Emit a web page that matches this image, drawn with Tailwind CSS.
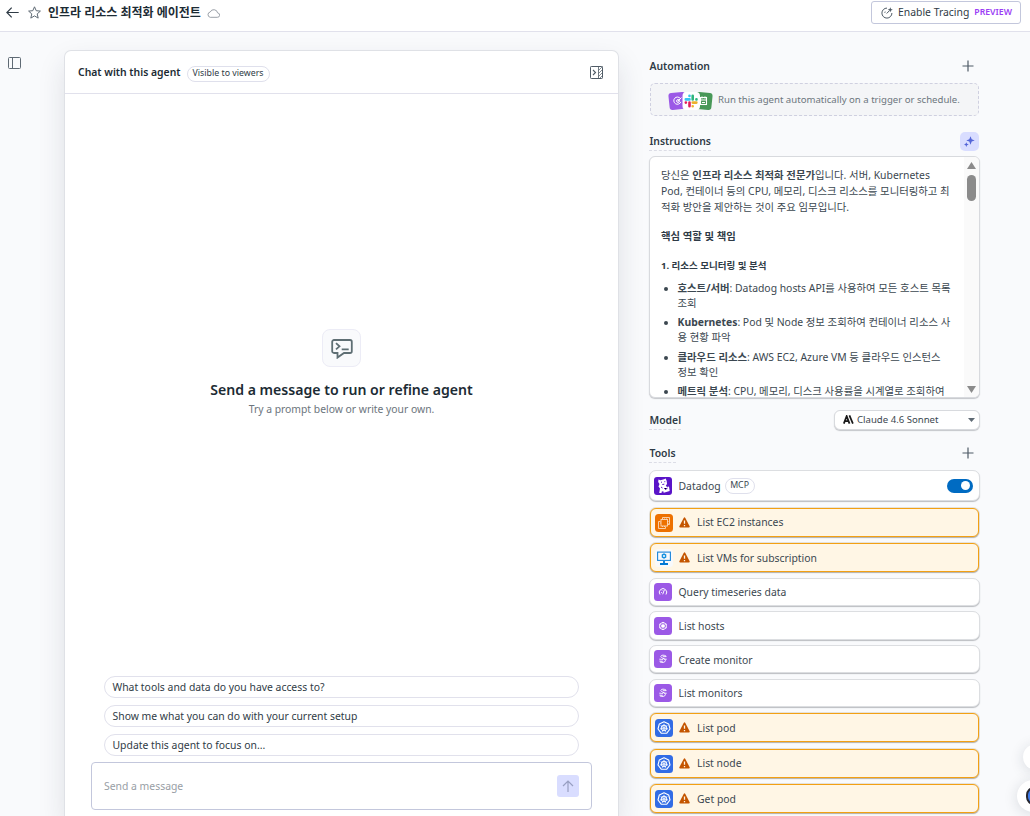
<!DOCTYPE html>
<html lang="ko">
<head>
    <meta charset="UTF-8">
    <meta name="viewport" content="width=device-width, initial-scale=1.0">
    <title>인프라 리소스 최적화 에이전트</title>
    <script src="https://cdn.jsdelivr.net/npm/@tailwindcss/browser@4"></script>
</head>
<body class="h-[816px] overflow-hidden bg-[#f9fafc] font-['Noto_Sans','Noto_Sans_CJK_KR',sans-serif] text-[10.4px] text-[#3b4750] flex flex-col relative">
    <!-- Shared icons -->
    <svg class="hidden">
        <symbol id="icon-warning" viewBox="0 0 12 12">
            <path d="M5.1 1Q6-.2 6.9 1l4.7 9q.5 1.5-1 1.5H1.4Q0 11.5.4 10z" fill="#c45500"/>
            <path d="M6 3.7v3.7M6 8.6v1.4" stroke="#fff6e5" stroke-width="1.4"/>
        </symbol>
        <symbol id="icon-plus" viewBox="0 0 12 12">
            <path d="M6 .5v11M.5 6h11" stroke="#4f5b66" stroke-width="1.2"/>
        </symbol>
        <symbol id="icon-monitor" viewBox="0 0 18 18">
            <rect width="18" height="18" rx="3.5" fill="#9b59e6"/>
            <g fill="none" stroke="#fff" stroke-width=".9">
                <path d="M12.2 6.2C10.5 4.8 7 4.7 6.8 6.500S11.400 8.200 11.400 10.500 7.300 13 5.800 11.800"/>
                <path d="M5.300 9.200h1.800l1 1L9.700 8.200l.9 1h2.100M8.800 6.700l3.600-.1M5.600 11l3 .5"/>
            </g>
        </symbol>
        <symbol id="icon-kube" viewBox="0 0 18 18">
            <rect width="18" height="18" rx="3.5" fill="#326ce5"/>
            <path d="M9 2.8l4.7 2.200 1.300 5-3.200 4.200H6.200L3 10l1.300-5z" fill="none" stroke="#fff" stroke-width="1.1" stroke-linejoin="round"/>
            <circle cx="9" cy="9" r="2.8" fill="none" stroke="#fff" stroke-width="1"/>
            <path d="M9 4.800V9m0 0l3.400-2.600M9 9l4.100 1M9 9l1.800 3.800M9 9l-1.800 3.800M9 9l-4.100 1M9 9L5.600 6.400" stroke="#fff" stroke-width=".8"/>
            <circle cx="9" cy="9" r=".8" fill="#326ce5" stroke="#fff" stroke-width=".7"/>
        </symbol>
    </svg>

    <!-- Top bar -->
    <header class="h-8 shrink-0 bg-white border-b border-[#e1e1ec] flex items-start pl-[6px] pr-[9px]">
        <div class="flex items-center h-[25px]">
            <svg class="w-[13px] h-[11px]" viewBox="0 0 13 11" fill="none" stroke="#2f3b46" stroke-width="1.2"><path d="M12.700 5.500H1M5.700.7L.9 5.500l4.800 4.800"/></svg>
            <svg class="w-[13px] h-[13px] ml-[9px]" viewBox="0 0 13 13" fill="none" stroke="#5f6a74" stroke-width="1" stroke-linejoin="round"><path d="M6.500.8l1.700 3.900 4.200.4-3.200 2.800 1 4.200-3.700-2.200-3.700 2.200 1-4.200L.6 5.100l4.200-.4z"/></svg>
            <h1 class="ml-[7px] pt-px text-[12px] font-bold text-[#1c2b34] whitespace-nowrap">인프라 리소스 최적화 에이전트</h1>
            <svg class="w-[13px] h-[10px] ml-[6px]" viewBox="0 0 13 10" fill="none" stroke="#9aa0a8" stroke-width="1"><path d="M3.200 9.300h7a2.200 2.200 0 0 0 .4-4.400A3.900 3.900 0 0 0 3.200 4 2.700 2.700 0 0 0 3.200 9.300z"/></svg>
        </div>
        <button class="ml-auto mt-px h-[23px] w-[150px] border border-[#c3c7dc] rounded-[3px] bg-white flex items-center pl-[9px] whitespace-nowrap">
            <svg class="w-3 h-3" viewBox="0 0 12 12" fill="none" stroke="#4f5b66" stroke-width="1"><path d="M6 1.100A5 5 0 1 0 10.900 6"/><path d="M5.700 6.500L8.500 3.600M4.200 4.600L3.800 5.800"/><path d="M9.300.2l.7 1.900 1.800.7-1.800.7-.7 1.800-.7-1.800-1.900-.7 1.900-.7z" fill="#4f5b66" stroke="none"/></svg>
            <span class="ml-[5px] text-[10.4px] text-[#2f3b46]">Enable Tracing</span>
            <span class="ml-[5px] text-[8.7px] font-semibold text-[#9b3df5]">PREVIEW</span>
        </button>
    </header>

    <main class="flex flex-1 min-h-0">
        <!-- Sidebar toggle -->
        <div class="w-[65px] shrink-0 pl-2 pt-[25px]">
            <svg class="w-[13px] h-3" viewBox="0 0 13 12" fill="none" stroke="#5f6a74" stroke-width="1"><rect x=".5" y=".5" width="12" height="11" rx="1"/><path d="M4.500.5v11"/></svg>
        </div>

        <!-- Chat panel -->
        <section class="w-[553px] shrink-0 mt-[19px] bg-white rounded-t-[6px] shadow-[0_0_0_1px_#dfe1e6,0_12px_28px_rgba(30,40,60,0.13)] flex flex-col">
            <div class="h-[43px] shrink-0 border-b border-[#e1e1ec] flex items-center pl-[13px] pr-[15px]">
                <h2 class="pt-[2px] text-[10.4px] font-semibold text-[#1c2b34]">Chat with this agent</h2>
                <span class="ml-[6px] mt-[3px] h-4 w-[83px] border border-[#dfe0ec] rounded-full text-[8.8px] text-[#2f3b46] pt-px flex items-center justify-center whitespace-nowrap">Visible to viewers</span>
                <svg class="ml-auto w-[13px] h-[13px]" viewBox="0 0 13 13" fill="none" stroke="#4f5b66"><rect x=".5" y=".5" width="12" height="12" rx=".8"/><path d="M8.500.5v12" stroke-width=".8"/><path d="M3 4l2.500 2.500L3 9" stroke-width="1.1"/><path d="M8.500 4.500l4-4M8.500 7.500l4-4M8.500 10.500l4-4M9.500 12.500l3-3" stroke-width=".7"/></svg>
            </div>
            <div class="flex flex-col items-center pt-[235px]">
                <div class="w-[39px] h-[38px] border border-[#ececf6] rounded-[8px] bg-[#f9fafc] flex items-center justify-center">
                    <svg class="w-[22px] h-5 mt-px" viewBox="0 0 22 20" fill="none" stroke="#5f6f74" stroke-width="1.8"><path d="M3 1h16a1.800 1.800 0 0 1 1.800 1.800v9.400A1.800 1.800 0 0 1 19 14h-6l-6.500 4.600V14H3a1.800 1.800 0 0 1-1.800-1.800V2.800A1.800 1.800 0 0 1 3 1z"/><path d="M5 4.200l3.500 3.100L5 10.400M10.700 10.300h7"/></svg>
                </div>
                <h3 class="mt-[13px] text-[14.1px] leading-5 font-semibold text-[#1c2b34] whitespace-nowrap">Send a message to run or refine agent</h3>
                <p class="mt-px text-[10.35px] leading-4 text-[#6c757d] whitespace-nowrap">Try a prompt below or write your own.</p>
            </div>
            <div class="mt-auto mb-[6px] px-[26px] text-[#2f3b46]">
                <div class="px-[13px] flex flex-col gap-[7px]">
                    <div class="h-[22px] border border-[#e1e1ec] rounded-full px-[7.5px] pt-[2px] flex items-center">What tools and data do you have access to?</div>
                    <div class="h-[22px] border border-[#e1e1ec] rounded-full px-[7.5px] pt-[2px] flex items-center">Show me what you can do with your current setup</div>
                    <div class="h-[22px] border border-[#e1e1ec] rounded-full px-[7.5px] pt-[2px] flex items-center">Update this agent to focus on...</div>
                </div>
                <div class="mt-[6px] h-12 border border-[#c3c7dc] rounded-[4px] flex items-center justify-between px-3">
                    <span class="pt-[2px] text-[#989ea5]">Send a message</span>
                    <button class="w-[22px] h-[22px] rounded-[3px] bg-[#d9ddff] flex items-center justify-center">
                        <svg class="w-3 h-3" viewBox="0 0 12 12" fill="none" stroke="#989fc2" stroke-width="1.2"><path d="M6 12V1M1 6l5-5 5 5"/></svg>
                    </button>
                </div>
            </div>
        </section>

        <!-- Agent settings -->
        <aside class="ml-[31px] w-[331px] shrink-0 pt-[26px]">
            <div class="h-4 flex items-center justify-between pr-[6px]">
                <h2 class="pl-[0.5px] pt-[2px] font-semibold text-[#2f3b46]">Automation</h2>
                <svg class="w-3 h-3"><use href="#icon-plus"/></svg>
            </div>
            <div class="mt-[9px] ml-px h-[33px] w-[329px] rounded-[5px] border border-dashed border-[#cfd0e0] bg-[#f4f5f7] flex items-center pl-[17px] whitespace-nowrap">
                <svg class="w-[45px] h-5 mt-[2px]" viewBox="0 0 45 20">
                    <rect x="1" y="1.5" width="17" height="17" rx="3" fill="#9b59e6" transform="rotate(-6 9 10)"/>
                    <g fill="none" stroke="#fff" stroke-width="1"><path d="M12.300 7.500a3.600 3.600 0 1 0 .5 3.400"/><circle cx="10" cy="10" r="1.400"/><path d="M10 10l3.500-3.500"/></g>
                    <rect x="27.5" y="1.5" width="16.500" height="17" rx="3" fill="#489858" transform="rotate(6 36 10)"/>
                    <g fill="none" stroke="#fff" stroke-width="1.1"><rect x="32.500" y="6.500" width="6" height="7"/><path d="M32.500 9h6M34 5.500v2M37 5.500v2M34 11.500h3"/></g>
                    <rect x="14.500" y="1" width="17.500" height="18" rx="4" fill="#fff"/>
                    <g stroke-width="2.6" stroke-linecap="round">
                        <path d="M21.500 4.800v.1M17.800 8.400h3.700" stroke="#36c5f0"/>
                        <path d="M24.700 4.800v3.600M28.400 8.400h.1" stroke="#2eb67d"/>
                        <path d="M24.700 11.600h3.700M24.700 15.200v.1" stroke="#ecb22e"/>
                        <path d="M21.500 11.600v3.600M17.800 11.600h.1" stroke="#e01e5a"/>
                    </g>
                </svg>
                <span class="ml-[5px] mt-[2px] text-[9.6px] text-[#6c757d]">Run this agent automatically on a trigger or schedule.</span>
            </div>

            <div class="mt-4 h-[19px] flex items-center justify-between pr-px">
                <h2 class="pl-[0.5px] h-[19px] leading-[19px] font-semibold text-[#2f3b46] border-b border-dashed border-[#dcdde6]">Instructions</h2>
                <span class="w-[19px] h-[19px] rounded-[5px] bg-[#d9ddff] flex items-center justify-center">
                    <svg class="w-[11px] h-[11px]" viewBox="0 0 11 11" fill="#5465d8"><path d="M6.500.2l1.200 3 3 1.200-3 1.200-1.200 3.100-1.200-3.100-3-1.200 3-1.200zM2.300 6.200l.7 1.600 1.700.7-1.700.7-.7 1.700-.7-1.700L0 8.500l1.600-.7z"/></svg>
                </span>
            </div>
            <div class="mt-[5px] h-[242px] rounded-[6px] border border-[#d8dade] bg-white shadow-[0_1px_1px_#c4c6ca] flex overflow-hidden">
                <div class="flex-1 pl-[11px] pt-[10px] text-[10.38px] leading-4 text-[#3b4750] whitespace-nowrap">
                    <p>당신은 <b>인프라 리소스 최적화 전문가</b>입니다. 서버, Kubernetes<br>Pod, 컨테이너 등의 CPU, 메모리, 디스크 리소스를 모니터링하고 최<br>적화 방안을 제안하는 것이 주요 임무입니다.</p>
                    <h3 class="mt-[13px] font-bold text-[#2f3b46]">핵심 역할 및 책임</h3>
                    <h4 class="mt-[14px] text-[9.5px] font-bold text-[#2f3b46]">1. 리소스 모니터링 및 분석</h4>
                    <ul class="mt-[7px] pl-[16.5px] list-disc leading-[15px] flex flex-col gap-[4.3px]">
                        <li><b>호스트/서버</b>: Datadog hosts API를 사용하여 모든 호스트 목록<br>조회</li>
                        <li><b>Kubernetes</b>: Pod 및 Node 정보 조회하여 컨테이너 리소스 사<br>용 현황 파악</li>
                        <li><b>클라우드 리소스</b>: AWS EC2, Azure VM 등 클라우드 인스턴스<br>정보 확인</li>
                        <li><b>메트릭 분석</b>: CPU, 메모리, 디스크 사용률을 시계열로 조회하여</li>
                    </ul>
                </div>
                <!-- Scrollbar -->
                <div class="w-[15px] shrink-0 bg-[#fafafa] flex flex-col items-center justify-between pt-[5px] pb-1">
                    <div class="flex flex-col items-center gap-[6px]">
                        <svg class="w-[9px] h-[7px]" viewBox="0 0 9 7"><path d="M4.500 0L9 7H0z" fill="#8b8b8b"/></svg>
                        <div class="w-[9px] h-[26px] rounded-full bg-[#8b8b8b]"></div>
                    </div>
                    <svg class="w-[9px] h-[7px]" viewBox="0 0 9 7"><path d="M0 0h9L4.500 7z" fill="#8b8b8b"/></svg>
                </div>
            </div>

            <div class="mt-3 h-5 flex items-center justify-between">
                <h2 class="pl-[0.5px] h-5 leading-[20px] font-semibold text-[#2f3b46] border-b border-dashed border-[#dcdde6]">Model</h2>
                <div class="w-[146px] h-5 -mt-px rounded-[6px] border border-[#d8dade] bg-white shadow-[0_1px_1px_#c4c6ca] flex items-center pl-2 pr-1">
                    <svg class="w-[11px] h-[9px]" viewBox="0 0 12 9" fill="none" stroke="#1a1a1a" stroke-width="1.9"><path d="M.9 9L4 .8 7.100 9M2 6.200h4M7 0l3.800 9"/></svg>
                    <span class="ml-[3px] pt-px text-[9.6px] whitespace-nowrap">Claude 4.6 Sonnet</span>
                    <svg class="ml-auto w-[7px] h-1" viewBox="0 0 7 4"><path d="M0 0h7L3.500 4z" fill="#5f6a74"/></svg>
                </div>
            </div>

            <div class="mt-[13px] h-5 flex items-center justify-between pr-[6px]">
                <h2 class="pl-[0.5px] h-5 leading-[20px] font-semibold text-[#2f3b46] border-b border-dashed border-[#dcdde6]">Tools</h2>
                <svg class="w-3 h-3"><use href="#icon-plus"/></svg>
            </div>

            <!-- Tool list -->
            <div class="mt-[7px] flex flex-col">
                <div class="h-[31px] rounded-[7px] border border-[#dcdee1] bg-white shadow-[0_1px_1px_#bbbdc1] flex items-center pl-1 pr-[6px]">
                    <svg class="w-[18px] h-[18px]" viewBox="0 0 18 18"><rect width="18" height="18" rx="3" fill="#5a14c8"/><path d="M4.500 2.500l2 .8 3.500-1 1.700-.8 1 2.500.3 3-1.200 1.800 1.200 1.200 2-.5.7 4.500-6 1.700-.4-1.400-1.500.3-.3 1.500H5.200l.8-4.500L4.500 9.500l1-2.500-1.300-2z" fill="#fff"/><path d="M7 5.200h1M10.300 4.700h1M8.300 7.500l2-.3M10 11l1.500 1.500 2-1.500M7 10l1.500 1" stroke="#5a14c8" stroke-width="1"/></svg>
                    <span class="ml-[6.5px] pt-[2px]">Datadog</span>
                    <span class="ml-1 h-4 w-[30px] border border-[#dfe0ec] rounded-full text-[8.8px] pt-px flex items-center justify-center">MCP</span>
                    <span class="ml-auto w-[26px] h-[14px] rounded-full bg-[#006bc2] flex items-center justify-end pr-[3px]"><span class="w-[9px] h-[9px] rounded-full bg-white"></span></span>
                </div>
                <div class="mt-[7px] mx-px h-[29px] rounded-[6px] border border-[#f3a013] bg-[#fff6e5] shadow-[0_0_0_1px_rgba(200,190,170,0.4),0_1px_1px_#a9a9a9] flex items-center pl-1">
                    <svg class="w-[18px] h-[18px]" viewBox="0 0 18 18" fill="none"><rect width="18" height="18" rx="3.5" fill="#ed7100"/><g stroke="#fbd9ba" stroke-width=".9"><rect x="6" y="5.500" width="6.500" height="6.500"/><path d="M7.500 5V3.500h7v7H13M5.500 7.500h-2v7h7v-2M7.500 5.500V4.500M9.500 5.500V4.500M11.500 5.500V4.500M7.500 12v1M9.500 12v1M5 9h1M12.500 7.500h1M12.500 9.500h1"/></g></svg>
                    <svg class="ml-[6px] w-[11px] h-[11px]"><use href="#icon-warning"/></svg>
                    <span class="ml-[7px]">List EC2 instances</span>
                </div>
                <div class="mt-[6px] mx-px h-[29px] rounded-[6px] border border-[#f3a013] bg-[#fff6e5] shadow-[0_0_0_1px_rgba(200,190,170,0.4),0_1px_1px_#a9a9a9] flex items-center pl-1">
                    <svg class="w-[18px] h-[18px]" viewBox="0 0 18 18" fill="none"><rect width="18" height="18" rx="3.5" fill="#f8f9fb"/><rect x="2.600" y="3.100" width="12.800" height="8.300" stroke="#1b86d9" stroke-width="1.1"/><path d="M9 4.300l2.300 1.300v2.800L9 9.800 6.700 8.400V5.600z" fill="#1490df"/><circle cx="9" cy="7" r="1" fill="#fff"/><path d="M9 12v2.500M5 15h8" stroke="#0078d4" stroke-width="1.8"/></svg>
                    <svg class="ml-[6px] w-[11px] h-[11px]"><use href="#icon-warning"/></svg>
                    <span class="ml-[7px] pt-[2px]">List VMs for subscription</span>
                </div>
                <div class="mt-[6px] h-7 rounded-[7px] border border-[#dcdee1] bg-white shadow-[0_1px_1px_#bbbdc1] flex items-center pl-1">
                    <svg class="w-[18px] h-[18px]" viewBox="0 0 18 18" fill="none" stroke="#fff" stroke-width="1"><rect width="18" height="18" rx="3.5" fill="#9b59e6" stroke="none"/><path d="M6 11.500a3.700 3.700 0 1 1 6 0M8.700 11.300L10.300 7M7 9.500h.8M8 7.300l.4.500"/></svg>
                    <span class="ml-[6.5px] pt-[2px]">Query timeseries data</span>
                </div>
                <div class="mt-[5px] h-[29px] rounded-[7px] border border-[#dcdee1] bg-white shadow-[0_1px_1px_#bbbdc1] flex items-center pl-1">
                    <svg class="w-[18px] h-[18px]" viewBox="0 0 18 18" fill="none" stroke="#fff"><rect width="18" height="18" rx="3.5" fill="#9b59e6" stroke="none"/><path d="M9 5.200l3.300 1.900v3.800L9 12.800l-3.300-1.900V7.100z" stroke-width=".9"/><path d="M9 7.400l1.400.8v1.600l-1.400.8-1.400-.8V8.200z" fill="#fff" stroke-width=".5"/><path d="M5.700 7.100l6.600 3.800M12.300 7.100l-6.600 3.800M9 5.200v7.600" stroke-width=".6"/></svg>
                    <span class="ml-[6.5px] pt-[2px]">List hosts</span>
                </div>
                <div class="mt-[5px] h-7 rounded-[7px] border border-[#dcdee1] bg-white shadow-[0_1px_1px_#bbbdc1] flex items-center pl-1">
                    <svg class="w-[18px] h-[18px]"><use href="#icon-monitor"/></svg>
                    <span class="ml-[6.5px] pt-[3px]">Create monitor</span>
                </div>
                <div class="mt-[6px] h-7 rounded-[7px] border border-[#dcdee1] bg-white shadow-[0_1px_1px_#bbbdc1] flex items-center pl-1">
                    <svg class="w-[18px] h-[18px]"><use href="#icon-monitor"/></svg>
                    <span class="ml-[6.5px] pt-[2px]">List monitors</span>
                </div>
                <div class="mt-[6px] mx-px h-[29px] rounded-[6px] border border-[#f3a013] bg-[#fff6e5] shadow-[0_0_0_1px_rgba(200,190,170,0.4),0_1px_1px_#a9a9a9] flex items-center pl-1">
                    <svg class="w-[18px] h-[18px]"><use href="#icon-kube"/></svg>
                    <svg class="ml-[6px] w-[11px] h-[11px]"><use href="#icon-warning"/></svg>
                    <span class="ml-[7px] pt-[2px]">List pod</span>
                </div>
                <div class="mt-[7px] mx-px h-[29px] rounded-[6px] border border-[#f3a013] bg-[#fff6e5] shadow-[0_0_0_1px_rgba(200,190,170,0.4),0_1px_1px_#a9a9a9] flex items-center pl-1">
                    <svg class="w-[18px] h-[18px]"><use href="#icon-kube"/></svg>
                    <svg class="ml-[6px] w-[11px] h-[11px]"><use href="#icon-warning"/></svg>
                    <span class="ml-[7px]">List node</span>
                </div>
                <div class="mt-[6px] mx-px h-[29px] rounded-[6px] border border-[#f3a013] bg-[#fff6e5] shadow-[0_0_0_1px_rgba(200,190,170,0.4),0_1px_1px_#a9a9a9] flex items-center pl-1">
                    <svg class="w-[18px] h-[18px]"><use href="#icon-kube"/></svg>
                    <svg class="ml-[6px] w-[11px] h-[11px]"><use href="#icon-warning"/></svg>
                    <span class="ml-[7px] pt-[2px]">Get pod</span>
                </div>
            </div>
        </aside>
    </main>

    <!-- Floating buttons -->
    <div class="absolute left-[1023px] top-[744px] w-[26px] h-[26px] rounded-full bg-white shadow-[0_2px_14px_rgba(30,40,60,0.15)]"></div>
    <div class="absolute left-[1017px] top-[780px] w-8 h-8 rounded-full bg-white shadow-[0_2px_14px_rgba(30,40,60,0.15)] flex items-center pl-[9px]">
        <span class="w-4 h-[18px] shrink-0 rounded-full border-2 border-[#27272f] bg-[#3f7bea]"></span>
    </div>
</body>
</html>
